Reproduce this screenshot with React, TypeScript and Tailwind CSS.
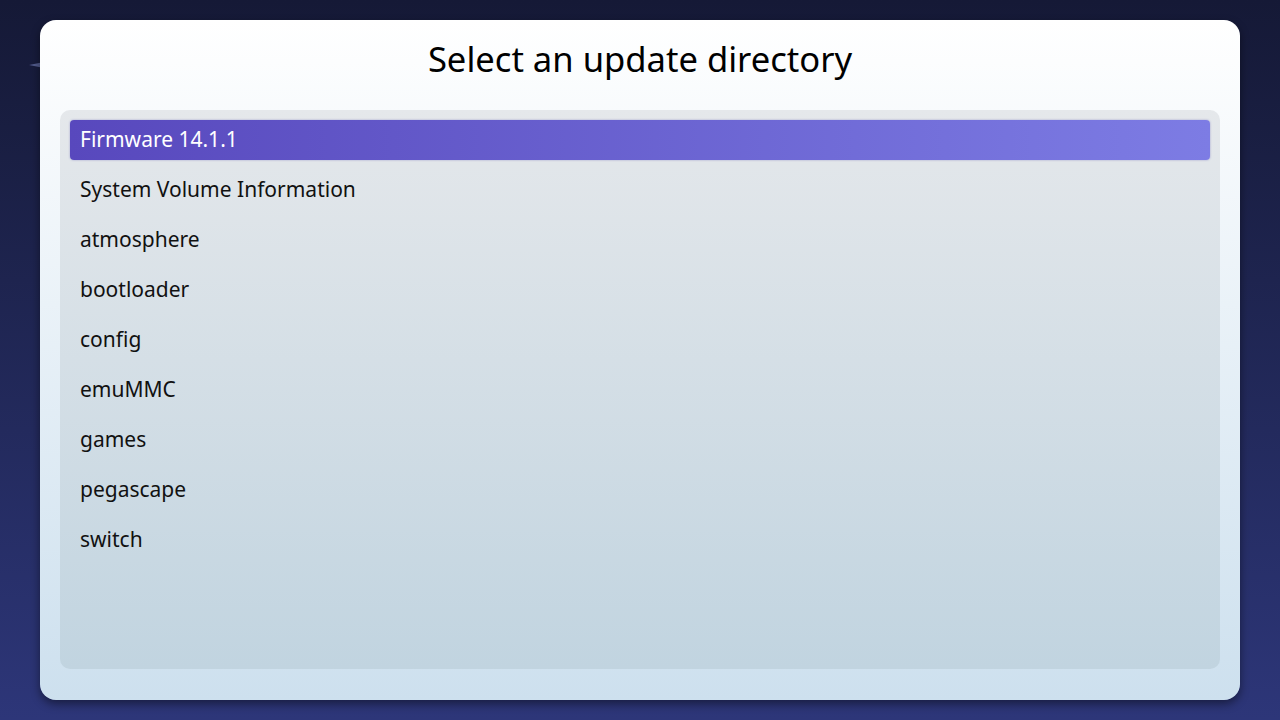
const dirs = [
  "Firmware 14.1.1",
  "System Volume Information",
  "atmosphere",
  "bootloader",
  "config",
  "emuMMC",
  "games",
  "pegascape",
  "switch",
]

const App = () => {
  const selected = 0

  return (
    <div
      className="relative w-[1280px] h-[720px] overflow-hidden bg-gradient-to-b from-[#151936] to-[#2d3679] px-10 py-5"
      style={{ fontFamily: '"Noto Sans", "Open Sans", sans-serif' }}
    >
      {/* little star peeking out from behind the dialog */}
      <svg className="absolute left-[29px] top-[52px]" width="30" height="26" viewBox="0 0 30 26">
        <path d="M15 0 L17.5 10.5 L30 13 L17.5 15.5 L15 26 L12.5 15.5 L0 13 L12.5 10.5 Z" fill="#525b8c" />
      </svg>

      <div className="relative flex h-full flex-col rounded-2xl bg-gradient-to-b from-white to-[#cde0ee] shadow-[0_4px_10px_rgba(0,0,0,0.45)] px-5 pb-[31px]">
        <h1 className="h-[90px] flex items-center justify-center text-[34.6px] text-black pb-[13px]">
          Select an update directory
        </h1>

        <div className="flex-1 rounded-[10px] bg-gradient-to-b from-[#e5e8eb] to-[#c1d4e0] p-[10px] flex flex-col gap-[10px]">
          {dirs.map((d, i) => (
            <div
              key={d}
              className={
                i === selected
                  ? "h-10 flex items-center rounded-[4px] px-[10px] text-[21px] text-white bg-gradient-to-r from-[#5848bd] to-[#7d7ce4] shadow-[0_0_2px_rgba(80,70,180,0.5)]"
                  : "h-10 flex items-center px-[10px] text-[21px] text-[#111]"
              }
            >
              {d}
            </div>
          ))}
        </div>
      </div>
    </div>
  )
}

export default App
